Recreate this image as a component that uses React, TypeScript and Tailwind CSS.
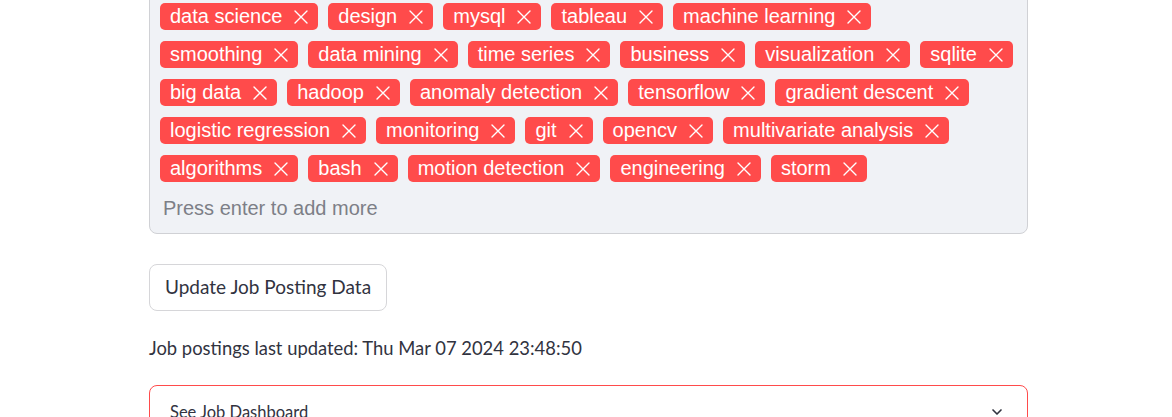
const tags = [
  "data science",
  "design",
  "mysql",
  "tableau",
  "machine learning",
  "smoothing",
  "data mining",
  "time series",
  "business",
  "visualization",
  "sqlite",
  "big data",
  "hadoop",
  "anomaly detection",
  "tensorflow",
  "gradient descent",
  "logistic regression",
  "monitoring",
  "git",
  "opencv",
  "multivariate analysis",
  "algorithms",
  "bash",
  "motion detection",
  "engineering",
  "storm",
];

const CloseIcon = () => (
  <svg width="14" height="14" viewBox="0 0 14 14" fill="none">
    <path d="M1 1L13 13M13 1L1 13" stroke="white" strokeWidth="1.4" strokeLinecap="round" />
  </svg>
);

const Tag = ({ label }: { label: string }) => (
  <span className="flex items-center h-[27px] rounded-[5px] bg-[#ff4b4b] pl-[10px] pr-[10px] gap-[12px] text-white text-[20px] leading-[23px] font-['Liberation_Sans',Arial,sans-serif]">
    {label}
    <CloseIcon />
  </span>
);

export default function App() {
  return (
    <div className="w-[1172px] h-[417px] overflow-hidden bg-white pl-[149px] font-['Lato','Open_Sans',sans-serif] text-[#31333f]">
      <div className="w-[879px]">
        <div className="-mt-[8px] rounded-[8px] border border-[#d0d1d5] bg-[#f0f2f6] pl-[10px] pr-[9px] pt-[10px] pb-[13px]">
          <div className="flex flex-wrap gap-x-[10px] gap-y-[11px]">
            {tags.map((t) => (
              <Tag key={t} label={t} />
            ))}
          </div>
          <div className="mt-[15px] ml-[3px] h-[23px] text-[20px] leading-[23px] text-[#7d7f87] font-['Liberation_Sans',Arial,sans-serif]">
            Press enter to add more
          </div>
        </div>

        <button className="mt-[30px] h-[47px] px-[15px] rounded-[8px] border border-[#d6d6d9] bg-white text-[19px] text-[#31333f]">
          Update Job Posting Data
        </button>

        <p className="mt-[23px] text-[18.4px] leading-[28px]">
          Job postings last updated: Thu Mar 07 2024 23:48:50
        </p>

        <div className="mt-[23px] rounded-[8px] border border-[#ff4b4b] h-[80px]">
          <div className="flex items-center justify-between pl-[20px] pr-[22px] pt-[14px]">
            <span className="text-[16.5px] leading-[24px]">See Job Dashboard</span>
            <svg width="16" height="16" viewBox="0 0 24 24" fill="none">
              <path d="M6 9l6 6 6-6" stroke="#31333f" strokeWidth="2.5" strokeLinecap="round" strokeLinejoin="round" />
            </svg>
          </div>
        </div>
      </div>
    </div>
  );
}
